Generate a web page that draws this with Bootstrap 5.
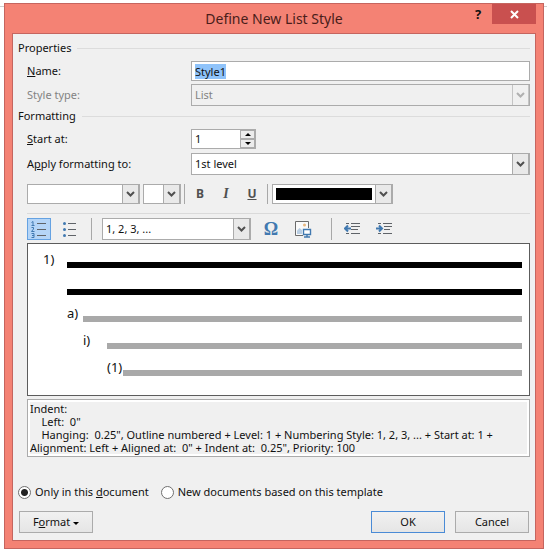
<!DOCTYPE html>
<html lang="en">
<head>
<meta charset="utf-8">
<meta name="viewport" content="width=device-width, initial-scale=1">
<title>Define New List Style</title>
<link href="https://cdn.jsdelivr.net/npm/bootstrap@5.3.0/dist/css/bootstrap.min.css" rel="stylesheet">
<style>
  body { font-family: "Noto Sans", "Open Sans", sans-serif; font-size: 11px; line-height: 16px; color: #111; background: #fff; }
  .page-rule { border-top: 1px solid #cfcfcf; margin-top: 6px; }
  .dialog-frame { background: #f48274; border: 1px solid #c5655f; margin: -4px 3px 4px 4px; padding: 0 7px 7px; position: relative; }
  .title-strip { height: 29px; }
  .title-strip h1 { font-size: 14px; line-height: 30px; color: #4a1d1a; }
  .title-side { width: 88px; }
  .title-side button { border: 0; border-radius: 0; padding: 0; height: 20px; line-height: 20px; }
  .help-btn { width: 28px; background: transparent; color: #111; font-size: 13px; font-weight: 700; }
  .close-btn { width: 44px; background: #c9504f; color: #fff; }
  .close-btn svg { display: block; margin: auto; }
  .dialog-body { background: #f0f0f0; border: 1px solid #c5655f; padding: 6px 5px 7px; }
  .sect { gap: 6px; height: 16px; }
  .sect::after { content: ""; flex: 1; border-top: 1px solid #dcdcdc; }
  .sect h2 { font-size: 11px; line-height: 16px; }
  .sect-next { margin-top: 2px; }
  .inset { padding: 5px 0 0 9px; }
  .lbl { width: 164px; flex: none; }
  .muted { color: #838383; }
  .row-tight { margin-top: 3px; }
  .row-bar { margin-top: 9px; }
  .box { border: 1px solid #ababab; border-radius: 0; background-color: #fff; font-size: 11px; line-height: 16px; padding: 0 3px; color: #111; height: 20px; min-width: 0; outline: 0; }
  .tall { height: 22px; }
  select.box { appearance: none; padding-right: 18px;
    background-image: url("data:image/svg+xml,%3Csvg xmlns='http://www.w3.org/2000/svg' width='17' height='22'%3E%3Cpath fill='%23e9e9e9' stroke='%23ababab' d='M.5-1H16.5V24H.5z'/%3E%3Cpath fill='none' stroke='%23505050' stroke-width='2' d='M5 9l3.500 3.500L12 9'/%3E%3C/svg%3E");
    background-repeat: no-repeat; background-position: right center; }
  select.box:disabled { background-color: #f0f0f0; color: #838383; opacity: 1;
    background-image: url("data:image/svg+xml,%3Csvg xmlns='http://www.w3.org/2000/svg' width='17' height='22'%3E%3Cpath fill='%23f0f0f0' stroke='%23c4c4c4' d='M.5-1H16.5V24H.5z'/%3E%3Cpath fill='none' stroke='%23b0b0b0' stroke-width='2' d='M5 9l3.500 3.500L12 9'/%3E%3C/svg%3E"); }
  ::selection { background: #8fc3fa; color: #111; }
  .spin { width: 65px; height: 20px; border: 1px solid #ababab; background: #fff; }
  .spin input { border: 0; padding: 0 3px; width: 46px; outline: 0; font-size: 11px; background: transparent; color: #111; }
  .spin button { border: 1px solid #ababab; background: #ececec; width: 15px; height: 9px; padding: 0; line-height: 0; }
  .spin svg { display: block; margin: auto; }
  .w-font { width: 113px; }
  .w-size { width: 38px; margin: 0 3px; }
  .w-num { width: 149px; margin-left: 10px; }
  .color-pick { width: 121px; margin-left: 4px; }
  .color-pick select.box { width: 100%; }
  .swatch { left: 4px; top: 4px; right: 21px; height: 12px; background: #000; pointer-events: none; }
  .vsep { width: 1px; background: #a8a8a8; flex: none; align-self: stretch; }
  .tool { border: 0; background: transparent; padding: 0; color: #505050; font-size: 12px; line-height: 20px; width: 26px; }
  .letters { padding: 0 2px; }
  .slanted { font-family: "Liberation Serif", serif; font-size: 14px; }
  .icon-tool { width: 24px; height: 22px; flex: none; }
  .omega { font-family: "Liberation Serif", serif; font-size: 18px; color: #4179b0; }
  .tool svg { display: block; margin: auto; }
  .picked { background: #b5d5f7; border: 1px solid #65a2e2; }
  .icon-set { gap: 8px; padding-left: 8px; }
  .list-kinds { gap: 7px; margin-right: 9px; }
  .thin { height: 1px; background: #dadada; }
  .preview { border: 1px solid #5c5c5c; background: #fff; margin-top: 3px; padding: 2px 7px 14px 15px; font-size: 13px; line-height: 27px; }
  .line-row { height: 27px; }
  .stroke-bar { flex: 1; height: 6px; margin-top: 16px; background: #a9a9a9; }
  .solid .stroke-bar { background: #000; }
  .tag-wide { width: 24px; }
  .tag-mid { width: 16px; }
  .lv2 { padding-left: 24px; }
  .lv3 { padding-left: 40px; }
  .lv4 { padding-left: 64px; }
  .summary { border: 1px solid #ababab; box-shadow: inset 0 0 0 2px #fff; margin-top: 3px; padding: 2px; line-height: 13px; white-space: pre-wrap; min-height: 58px; }
  .scope { gap: 12px; margin-top: 27px; }
  .choice { gap: 4px; }
  .choice input { appearance: none; width: 13px; height: 13px; margin: 0; border: 1px solid #707070; border-radius: 50%; background: #fff; }
  .choice input:checked { background: radial-gradient(circle, #222 0 3px, #fff 4px); }
  .actions { gap: 10px; margin: 11px 1px 0; }
  .push { border: 1px solid #ababab; border-radius: 0; background: linear-gradient(#f1f1f1, #e5e5e5); width: 74px; height: 22px; padding: 0; color: #111; line-height: 18px; }
  .push.default { border-color: #4a8bd6; }
</style>
<script src="https://cdn.jsdelivr.net/npm/bootstrap@5.3.0/dist/js/bootstrap.bundle.min.js"></script>
</head>
<body>
<div class="page-rule"></div>
<main class="dialog-frame">
  <header class="title-strip d-flex justify-content-between align-items-start">
    <div class="title-side"></div>
    <h1 class="m-0 fw-normal text-nowrap">Define New List Style</h1>
    <div class="title-side d-flex justify-content-end">
      <button class="help-btn" type="button" aria-label="Help">?</button>
      <button class="close-btn" type="button" aria-label="Close"><svg width="9" height="9" viewBox="0 0 9 9"><path d="M1 1l7 7M8 1L1 8" stroke="#fff" stroke-width="2"/></svg></button>
    </div>
  </header>
  <form class="dialog-body">
    <div class="sect d-flex align-items-center"><h2 class="m-0 fw-normal">Properties</h2></div>
    <div class="inset">
      <div class="d-flex align-items-center"><label class="lbl" for="nm"><u>N</u>ame:</label><input class="box flex-fill" id="nm" type="text" value="Style1"></div>
      <div class="d-flex align-items-center row-tight"><label class="lbl muted" for="ty">Style type:</label><select class="box tall flex-fill" id="ty" disabled><option>List</option></select></div>
    </div>
    <div class="sect sect-next d-flex align-items-center"><h2 class="m-0 fw-normal">Formatting</h2></div>
    <div class="inset">
      <div class="d-flex align-items-center"><label class="lbl" for="st"><u>S</u>tart at:</label>
        <div class="spin d-flex justify-content-between"><input id="st" type="text" value="1">
          <div class="d-flex flex-column"><button type="button" aria-label="Increase"><svg width="6" height="3"><path d="M3 0l3 3H0z"/></svg></button><button type="button" aria-label="Decrease"><svg width="6" height="3"><path d="M0 0h6L3 3z"/></svg></button></div>
        </div>
      </div>
      <div class="d-flex align-items-center mt-1"><label class="lbl" for="ap">A<u>p</u>ply formatting to:</label><select class="box tall flex-fill" id="ap"><option>1st level</option></select></div>
      <div class="d-flex align-items-center row-bar">
        <select class="box w-font" aria-label="Font"><option></option></select>
        <select class="box w-size" aria-label="Font size"><option></option></select>
        <span class="vsep"></span>
        <div class="letters d-flex">
          <button class="tool fw-bold" type="button">B</button>
          <button class="tool fw-bold fst-italic slanted" type="button">I</button>
          <button class="tool fw-bold text-decoration-underline" type="button">U</button>
        </div>
        <span class="vsep"></span>
        <div class="color-pick position-relative"><select class="box d-block" aria-label="Font color"><option></option></select><div class="swatch position-absolute"></div></div>
      </div>
      <div class="thin row-bar"></div>
      <div class="d-flex align-items-center mt-1">
        <div class="list-kinds d-flex">
          <button class="tool icon-tool picked" type="button" aria-label="Numbering"><svg width="16" height="18" viewBox="0 0 16 18"><path d="M6 3.500h9M6 9.500h9M6 15.500h9" stroke="#5f6368"/><path d="M.5 2.500L2 1.500v4M.5 5.500h3M.5 7.500h2v1.500L.5 11.500h3M.5 13.500h2.500v4H.5M1 15.500h2" fill="none" stroke="#4179b0"/></svg></button>
          <button class="tool icon-tool" type="button" aria-label="Bullets"><svg width="14" height="18" viewBox="0 0 14 18"><path d="M5 3.500h8M5 9.500h8M5 15.500h8" stroke="#5f6368"/><g fill="#4179b0"><circle cx="1.500" cy="3.500" r="1.500"/><circle cx="1.500" cy="9.500" r="1.500"/><circle cx="1.500" cy="15.500" r="1.500"/></g></svg></button>
        </div>
        <span class="vsep"></span>
        <select class="box tall w-num" aria-label="Number style"><option>1, 2, 3, ...</option></select>
        <div class="icon-set d-flex">
          <button class="tool icon-tool omega fw-bold" type="button" aria-label="Insert symbol">Ω</button>
          <button class="tool icon-tool" type="button" aria-label="Insert picture"><svg width="17" height="17" viewBox="0 0 17 17"><path d="M8 14.500H.5V.5h13V7" fill="#fafafa" stroke="#6b6b6b"/><circle cx="9.500" cy="4" r="1.500" fill="#e8b77f"/><path d="M2 13V9.500L4.500 7 7 9v4z" fill="#b9cee3"/><path d="M8.500 8.500h7v5h-7z" fill="#fff" stroke="#4179b0" stroke-width="1.400"/><path d="M12 13.500v2M9 16h6" stroke="#4179b0" stroke-width="1.400"/></svg></button>
        </div>
        <span class="vsep ms-3"></span>
        <div class="icon-set d-flex">
          <button class="tool icon-tool" type="button" aria-label="Decrease indent"><svg width="16" height="12" viewBox="0 0 16 12"><path d="M2 .5h3M7 .5h9M7 3.500h9M7 6.500h7M2 10.500h3M7 10.500h9" stroke="#5f6368"/><path d="M7 5.500H1M4 2.500l-3 3 3 3" fill="none" stroke="#4179b0" stroke-width="2"/></svg></button>
          <button class="tool icon-tool" type="button" aria-label="Increase indent"><svg width="16" height="12" viewBox="0 0 16 12"><path d="M2 .5h3M7 .5h9M8 3.500h8M8 6.500h6M2 10.500h3M7 10.500h9" stroke="#5f6368"/><path d="M0 5.500h6M3 2.500l3 3-3 3" fill="none" stroke="#4179b0" stroke-width="2"/></svg></button>
        </div>
      </div>
      <div class="preview">
        <div class="line-row d-flex solid"><span class="tag-wide">1)</span><span class="stroke-bar"></span></div>
        <div class="line-row d-flex solid"><span class="tag-wide"></span><span class="stroke-bar"></span></div>
        <div class="line-row d-flex lv2"><span class="tag-mid">a)</span><span class="stroke-bar"></span></div>
        <div class="line-row d-flex lv3"><span class="tag-wide">i)</span><span class="stroke-bar"></span></div>
        <div class="line-row d-flex lv4"><span class="tag-mid">(1)</span><span class="stroke-bar"></span></div>
      </div>
      <div class="summary">Indent:
    Left:  0"
    Hanging:  0.25", Outline numbered + Level: 1 + Numbering Style: 1, 2, 3, ... + Start at: 1 + Alignment: Left + Aligned at:  0" + Indent at:  0.25", Priority: 100</div>
    </div>
    <div class="scope d-flex">
      <label class="choice d-flex align-items-center"><input type="radio" name="scope" checked><span>Only in this <u>d</u>ocument</span></label>
      <label class="choice d-flex align-items-center"><input type="radio" name="scope"><span>New documents based on this template</span></label>
    </div>
    <div class="actions d-flex">
      <button class="push me-auto" type="button">F<u>o</u>rmat <svg width="6" height="3" viewBox="0 0 6 3" class="align-middle"><path d="M0 0h6L3 3z"/></svg></button>
      <button class="push default" type="submit">OK</button>
      <button class="push" type="button">Cancel</button>
    </div>
  </form>
</main>
<script>
  const nameBox = document.getElementById("nm");
  nameBox.focus();
  nameBox.select();
</script>
</body>
</html>
